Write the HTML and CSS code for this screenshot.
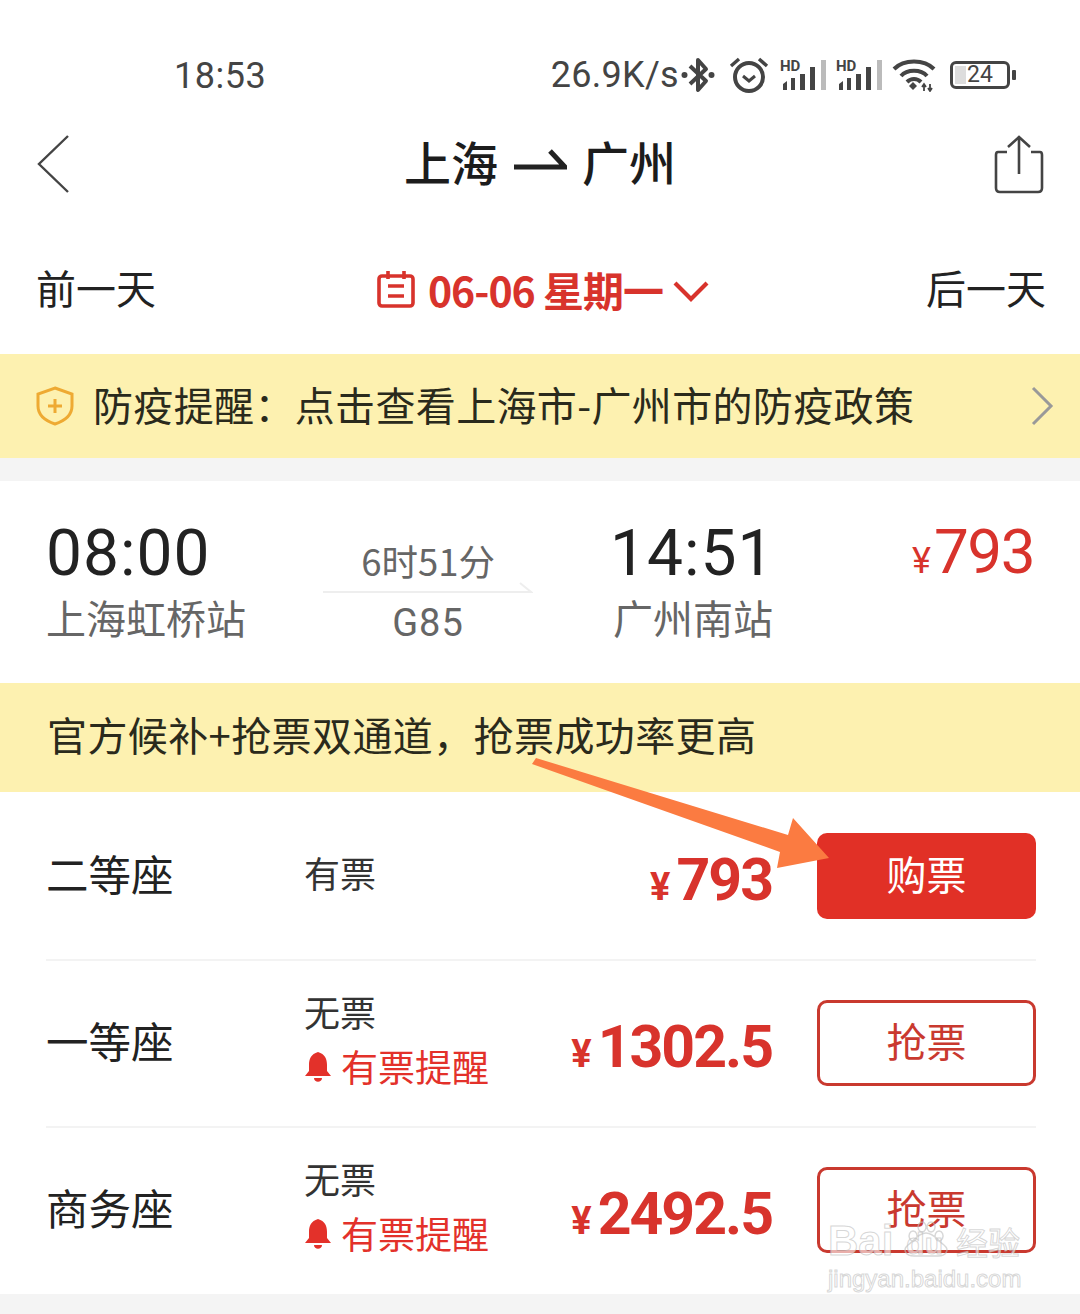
FILE: index.html
```html
<!DOCTYPE html>
<html lang="zh-CN">
<head>
    <meta charset="UTF-8">
    <meta name="viewport" content="width=device-width, initial-scale=1.0">
    <title>上海 - 广州</title>
    <link rel="stylesheet" href="styles.css">
</head>
<body>
    <div class="page">
        <!-- STATUS BAR -->
        <div class="status-bar">
            <span class="clock">18:53</span>
            <div class="status-right">
                <span class="speed">26.9K/s</span>
                <svg class="ico-bt" width="34" height="38" viewBox="0 0 34 38"><path d="M9 10 L25 25 L17 34 V4 L25 13 L9 28" fill="none" stroke="#444" stroke-width="4" stroke-linejoin="round"/><circle cx="3.5" cy="19" r="3" fill="#444"/><circle cx="30.5" cy="19" r="3" fill="#444"/></svg>
                <svg class="ico-alarm" width="40" height="38" viewBox="0 0 40 38"><circle cx="20" cy="21" r="14" fill="none" stroke="#444" stroke-width="4"/><path d="M14 20 L20 25 L26 20" fill="none" stroke="#444" stroke-width="3"/><path d="M2 10 L10 3 M38 10 L30 3" stroke="#444" stroke-width="3.4"/></svg>
                <svg class="ico-signal" width="46" height="32" viewBox="0 0 46 32"><text x="0" y="12" class="hd">HD</text><path d="M3 25 L7 22 V31 H3 Z M11 19 H15 V31 H11 Z M20 15 H25 V31 H20 Z M30 8 H35 V31 H30 Z" fill="#444"/><rect x="41" y="1" width="5" height="30" fill="#bbb"/></svg>
                <svg class="ico-signal" width="46" height="32" viewBox="0 0 46 32"><text x="0" y="12" class="hd">HD</text><path d="M3 25 L7 22 V31 H3 Z M11 19 H15 V31 H11 Z M20 15 H25 V31 H20 Z M30 8 H35 V31 H30 Z" fill="#444"/><rect x="41" y="1" width="5" height="30" fill="#bbb"/></svg>
                <svg class="ico-wifi" width="44" height="34" viewBox="0 0 44 34"><path d="M2 11 C12 1 32 1 42 11 M9 18 C15 11 29 11 35 18 M15 24 C19 20 25 20 29 24" fill="none" stroke="#444" stroke-width="4"/><path d="M17 28 L21 24 L25 28 L21 32 Z" fill="#444"/><path d="M32 26 V33 M38 26 V33 M30 29 L32 26 L34 29 M36 30 L38 33 L40 30" fill="none" stroke="#444" stroke-width="1.8"/></svg>
                <div class="battery">
                    <div class="battery-body"><span class="battery-level"></span><span class="battery-num">24</span></div>
                    <span class="battery-cap"></span>
                </div>
            </div>
        </div>

        <!-- TITLE -->
        <div class="title-bar">
            <svg class="back" width="34" height="60" viewBox="0 0 34 60"><path d="M32 2 L3 30 L32 58" fill="none" stroke="#444" stroke-width="2.4"/></svg>
            <div class="title">
                <span>上海</span>
                <svg width="54" height="24" viewBox="0 0 54 24"><path d="M1 19 H52 L37 3" fill="none" stroke="#222" stroke-width="5"/></svg>
                <span>广州</span>
            </div>
            <svg class="share" width="50" height="60" viewBox="0 0 50 60"><path d="M13 18 H4 Q2 18 2 21 V54 Q2 58 6 58 H44 Q48 58 48 54 V21 Q48 18 46 18 H37" fill="none" stroke="#444" stroke-width="2.6"/><path d="M25 40 V3 M14 13 L25 3 L36 13" fill="none" stroke="#444" stroke-width="2.6"/></svg>
        </div>

        <!-- DATE -->
        <div class="date-bar">
            <span>前一天</span>
            <div class="date-pick">
                <svg width="38" height="38" viewBox="0 0 38 38"><rect x="2" y="6" width="34" height="30" rx="3" fill="none" stroke="#d8332c" stroke-width="3.6"/><path d="M11 1 V9 M27 1 V9 M11 16 H27 M11 26 H27" stroke="#d8332c" stroke-width="3.6" fill="none"/></svg>
                <span class="date-text">06-06 星期一</span>
                <svg class="date-chevron" width="36" height="22" viewBox="0 0 36 22"><path d="M2 3 L18 19 L34 3" fill="none" stroke="#d8332c" stroke-width="4.2"/></svg>
            </div>
            <span>后一天</span>
        </div>

        <!-- NOTICE -->
        <div class="notice">
            <svg width="38" height="40" viewBox="0 0 38 40"><path d="M19 2 L36 8 V20 C36 29 28 35 19 38 C10 35 2 29 2 20 V8 Z" fill="none" stroke="#eeaa33" stroke-width="3"/><path d="M19 13 V27 M12 20 H26" stroke="#eeaa33" stroke-width="3"/></svg>
            <span class="notice-text">防疫提醒：点击查看上海市-广州市的防疫政策</span>
            <svg class="notice-arrow" width="24" height="40" viewBox="0 0 24 40"><path d="M3 2 L21 20 L3 38" fill="none" stroke="#999" stroke-width="3"/></svg>
        </div>

        <div class="gap"></div>

        <!-- TRAIN -->
        <div class="train">
            <div class="train-col depart">
                <div class="time">08:00</div>
                <div class="station">上海虹桥站</div>
            </div>
            <div class="train-mid">
                <div class="duration">6时51分</div>
                <svg class="train-line" width="210" height="12" viewBox="0 0 210 12"><path d="M0 10 H208 L197 1" fill="none" stroke="#eee" stroke-width="2"/></svg>
                <div class="train-no">G85</div>
            </div>
            <div class="train-col arrive">
                <div class="time">14:51</div>
                <div class="station">广州南站</div>
            </div>
            <div class="train-price"><span class="yen">¥</span>793</div>
        </div>

        <div class="promo">官方候补+抢票双通道，抢票成功率更高</div>

        <!-- SEATS -->
        <div class="seats">
            <div class="seat">
                <div class="seat-name">二等座</div>
                <div class="seat-info"><div>有票</div></div>
                <div class="seat-price"><span class="seat-yen">¥</span>793</div>
                <div class="btn btn-buy">购票</div>
            </div>
            <div class="seat">
                <div class="seat-name">一等座</div>
                <div class="seat-info">
                    <div>无票</div>
                    <div class="remind">
                        <svg width="28" height="32" viewBox="0 0 28 32"><path d="M14 1 C7 3 5 8 5 14 V20 L1 25 H27 L23 20 V14 C23 8 21 3 14 1 Z M10 27 H18 C18 32 10 32 10 27 Z" fill="#e3312a"/></svg>
                        <span>有票提醒</span>
                    </div>
                </div>
                <div class="seat-price"><span class="seat-yen">¥</span>1302.5</div>
                <div class="btn btn-grab">抢票</div>
            </div>
            <div class="seat">
                <div class="seat-name">商务座</div>
                <div class="seat-info">
                    <div>无票</div>
                    <div class="remind">
                        <svg width="28" height="32" viewBox="0 0 28 32"><path d="M14 1 C7 3 5 8 5 14 V20 L1 25 H27 L23 20 V14 C23 8 21 3 14 1 Z M10 27 H18 C18 32 10 32 10 27 Z" fill="#e3312a"/></svg>
                        <span>有票提醒</span>
                    </div>
                </div>
                <div class="seat-price"><span class="seat-yen">¥</span>2492.5</div>
                <div class="btn btn-grab">抢票</div>
            </div>
        </div>

        <div class="bottom-gap"></div>

        <!-- annotation arrow drawn over the screenshot -->
        <svg class="annot" width="1080" height="1314" viewBox="0 0 1080 1314"><path d="M536 758 L788 835 L793 818 L829 858 L777 868 L780 852 L532 764 Z" fill="#fb7b41"/></svg>

        <!-- watermark -->
        <div class="watermark">
            <div class="wm-logo">
                <span>Bai</span>
                <span class="wm-paw">du<svg width="56" height="36" viewBox="0 0 56 36"><path d="M28 12 C20 12 16 20 10 24 C4 29 8 35 16 35 H40 C48 35 52 29 46 24 C40 20 36 12 28 12 Z M15 10 a4 5 0 1 0 .1 0 Z M41 10 a4 5 0 1 0 .1 0 Z M24 1 a4 5 0 1 0 .1 0 Z M33 1 a4 5 0 1 0 .1 0 Z" fill="none" stroke="rgba(190,190,190,0.6)" stroke-width="1.5"/></svg></span>
                <span class="wm-cn">经验</span>
            </div>
            <div class="wm-url">jingyan.baidu.com</div>
        </div>
    </div>
</body>
</html>
```

FILE: styles.css
```css
* {
    box-sizing: border-box;
}
body {
    margin: 0;
    padding: 0;
    background-color: #fff;
    font-family: 'Noto Sans CJK SC', sans-serif;
}
.page {
    position: relative;
    width: 1080px;
    height: 1314px;
    overflow: hidden;
    background: #fff;
    color: #222;
}
.status-bar {
    height: 124px;
    padding: 47px 64px 0 174px;
    display: flex;
    justify-content: space-between;
    align-items: flex-start;
    color: #444;
    font-family: Roboto, sans-serif;
    font-size: 36px;
    line-height: 56px;
}
.clock {
    letter-spacing: 0.5px;
    line-height: 58px;
}
.status-right {
    display: flex;
    align-items: center;
    height: 56px;
}
.speed {
    letter-spacing: 0.3px;
    margin-right: 2px;
}
.ico-bt {
    margin-right: 14px;
}
.ico-alarm {
    margin-right: 11px;
}
.ico-signal {
    margin-right: 10px;
    overflow: visible;
}
.ico-wifi {
    margin-right: 14px;
}
.hd {
    font-family: Roboto, sans-serif;
    font-size: 15px;
    font-weight: 700;
    fill: #444;
}
.battery {
    display: flex;
    align-items: center;
    gap: 2px;
}
.battery-body {
    position: relative;
    width: 60px;
    height: 28px;
    border: 3px solid #444;
    border-radius: 6px;
    display: flex;
    align-items: center;
    justify-content: center;
}
.battery-level {
    position: absolute;
    left: 2px;
    top: 2px;
    bottom: 2px;
    width: 11px;
    background: #ddd;
}
.battery-num {
    position: relative;
    font-size: 23px;
    line-height: 20px;
}
.battery-cap {
    width: 4px;
    height: 10px;
    background: #444;
    border-radius: 1px;
}
.title-bar {
    height: 80px;
    padding: 0 36px;
    display: flex;
    justify-content: space-between;
    align-items: center;
}
.title {
    display: flex;
    align-items: center;
    gap: 15px;
    font-size: 47px;
    font-weight: 500;
    color: #1c1c1c;
    margin: 0 0 8px 16px;
}
.date-bar {
    height: 150px;
    padding: 16px 34px 0 36px;
    display: flex;
    justify-content: space-between;
    align-items: center;
    font-size: 40px;
    color: #222;
}
.date-pick {
    display: flex;
    align-items: center;
    color: #d8332c;
    font-weight: 700;
    margin: 3px 0 0 4px;
}
.date-text {
    margin: 0 10px 0 13px;
    font-size: 41px;
    letter-spacing: -1px;
}
.date-chevron {
    margin-top: 5px;
}
.notice {
    height: 104px;
    background: #fdf1b0;
    padding: 0 26px 0 36px;
    display: flex;
    align-items: center;
    font-size: 40px;
    color: #2a2a1c;
}
.notice-text {
    margin: 0 0 4px 19px;
    flex: 1;
    letter-spacing: 0.35px;
}
.gap {
    height: 23px;
    background: #f4f4f4;
}
.train {
    height: 202px;
    padding: 34px 46px 0 46px;
    display: flex;
    align-items: flex-start;
}
.train-col.depart {
    width: 278px;
}
.train-col.arrive {
    margin-left: 80px;
    width: 300px;
}
.arrive .time {
    margin-left: -3px;
}
.time {
    font-family: Roboto, sans-serif;
    font-size: 64px;
    line-height: 77px;
    letter-spacing: 1px;
    color: #222;
}
.station {
    font-size: 40px;
    line-height: 50px;
    color: #666;
}
.train-mid {
    width: 210px;
    text-align: center;
    color: #666;
    font-size: 36.5px;
}
.duration {
    line-height: 50px;
    margin-top: 21px;
}
.train-line {
    display: block;
    margin-top: -4px;
}
.train-no {
    font-family: Roboto, sans-serif;
    font-size: 38px;
    line-height: 50px;
    letter-spacing: 1px;
    margin-top: 4px;
}
.train-price {
    flex: 1;
    text-align: right;
    font-family: Roboto, sans-serif;
    font-size: 62px;
    line-height: 74px;
    letter-spacing: -1.5px;
    color: #d8332c;
    white-space: nowrap;
}
.yen {
    font-size: 36px;
    margin-right: 3px;
    letter-spacing: 0;
}
.promo {
    height: 109px;
    background: #fdf1b0;
    padding: 0 0 8px 47px;
    display: flex;
    align-items: center;
    font-size: 40px;
    letter-spacing: 0.4px;
    color: #2a2a1c;
}
.seats {
    padding: 2px 0 1px;
}
.seat {
    height: 167px;
    margin-left: 46px;
    margin-right: 44px;
    display: flex;
    align-items: center;
    border-bottom: 2px solid #f3f3f3;
}
.seat:last-child {
    border-bottom: none;
    height: 165px;
}
.seat-name {
    width: 258px;
    font-size: 42.5px;
    color: #222;
    margin-bottom: 9px;
}
.seat-info {
    width: 200px;
    font-size: 36px;
    line-height: 55px;
    color: #333;
    margin-bottom: 9px;
}
.remind {
    display: flex;
    align-items: center;
    gap: 9px;
    font-size: 37px;
    color: #e3312a;
}
.seat-price {
    flex: 1;
    text-align: right;
    font-family: Roboto, sans-serif;
    font-weight: 700;
    font-size: 59px;
    letter-spacing: -2px;
    color: #d8332c;
    white-space: nowrap;
    margin-top: 5px;
    padding-right: 2px;
}
.seat-yen {
    font-size: 38px;
    margin-right: 6px;
    letter-spacing: 0;
}
.btn {
    width: 219px;
    height: 86px;
    margin: 0 0 1px 43px;
    padding-bottom: 6px;
    border-radius: 10px;
    display: flex;
    align-items: center;
    justify-content: center;
    font-size: 40px;
}
.btn-buy {
    background: #e13026;
    color: #fff;
}
.btn-grab {
    border: 3px solid #c9392f;
    color: #c9392f;
}
.bottom-gap {
    height: 22px;
    background: #f4f4f4;
}
.annot {
    position: absolute;
    left: 0;
    top: 0;
}
.watermark {
    position: absolute;
    left: 828px;
    top: 1220px;
    width: 192px;
    color: rgba(255, 255, 255, 0.6);
    -webkit-text-stroke: 1px rgba(180, 180, 180, 0.55);
    font-family: 'Liberation Sans', sans-serif;
}
.wm-logo {
    display: flex;
    align-items: center;
    justify-content: space-between;
    height: 42px;
    font-size: 42px;
    font-weight: 700;
    line-height: 42px;
    white-space: nowrap;
}
.wm-paw {
    position: relative;
    font-size: 30px;
    padding-top: 6px;
}
.wm-paw svg {
    position: absolute;
    left: -8px;
    top: 4px;
}
.wm-cn {
    font-family: 'Noto Sans CJK SC', sans-serif;
    font-size: 32px;
    font-weight: 400;
}
.wm-url {
    font-size: 24px;
    line-height: 34px;
    white-space: nowrap;
    text-align: center;
}
```
